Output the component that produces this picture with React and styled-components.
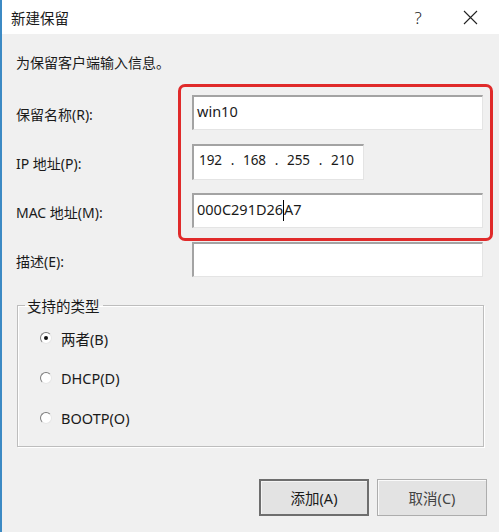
import React from "react";
import styled, { createGlobalStyle } from "styled-components";

const Global = createGlobalStyle`
  html, body { margin: 0; padding: 0; background: #f0f0f0; }
  body { font-family: "Noto Sans", "Noto Sans CJK SC", sans-serif; color: #1a1a1a; }
  * { box-sizing: border-box; }
`;

const Window = styled.div`
  width: 499px;
  height: 532px;
  display: flex;
  flex-direction: column;
  border-left: 2px solid #3c8ac4;
  background: #f0f0f0;
  overflow: hidden;
`;

const TitleBar = styled.div`
  height: 34px;
  flex: none;
  background: #ffffff;
  display: flex;
  align-items: center;
  padding-left: 9px;
  font-size: 14.5px;
  font-family: "Noto Sans CJK SC", sans-serif;
`;

const Title = styled.div`
  flex: 1;
`;

const TitleButton = styled.div`
  width: ${(p) => p.$w}px;
  font-size: 17px;
  font-weight: 300;
  color: #222;
  display: flex;
  justify-content: center;
  align-items: center;
  font-family: "Noto Sans", sans-serif;
`;

const Body = styled.div`
  flex: 1;
  padding: 0 14px;
  display: flex;
  flex-direction: column;
  font-size: 14px;
`;

const Intro = styled.div`
  margin-top: 19px;
  line-height: 20px;
  height: 20px;
`;

const Form = styled.div`
  position: relative;
  margin-top: 22px;
  display: grid;
  grid-template-columns: 176px 291px;
  grid-auto-rows: 35px;
  row-gap: 14px;
`;

const Label = styled.div`
  display: flex;
  align-items: center;
  padding-top: 2px;
  font-size: 14px;
`;

const Field = styled.div`
  width: ${(p) => p.$w || 291}px;
  height: ${(p) => p.$h || 35}px;
  background: #fff;
  border-top: 2px solid #a3a3a3;
  border-left: 2px solid #a3a3a3;
  border-right: 1px solid #e4e4e4;
  border-bottom: 1px solid #e4e4e4;
  padding: 4px 0 0 3px;
  font-size: 14.5px;
  line-height: 20px;
  white-space: pre;
  display: flex;
  align-items: flex-start;
`;

const Octet = styled.span`
  width: 27px;
  text-align: center;
  font-size: 13.5px;
`;

const Dot = styled.span`
  width: 17px;
  text-align: center;
  font-size: 13.5px;
`;

const Caret = styled.span`
  display: inline-block;
  width: 1px;
  height: 21px;
  margin-top: 1px;
  background: #000;
`;

const Highlight = styled.div`
  position: absolute;
  left: 162px;
  top: -11px;
  width: 315px;
  height: 157px;
  border: 3.5px solid #e02a2a;
  border-radius: 7px;
  pointer-events: none;
`;

const Group = styled.fieldset`
  margin: 18px 0 0 1px;
  width: 467px;
  height: 152px;
  padding: 12px 0 0 22px;
  border: 1px solid #bdbdbd;
  box-shadow: 1px 1px 0 #fff, inset 1px 1px 0 #fff;
  display: flex;
  flex-direction: column;
  gap: 20px;
`;

const Legend = styled.legend`
  margin-left: -15px;
  padding: 0 3px 0 2px;
  font-size: 14.5px;
`;

const RadioRow = styled.div`
  display: flex;
  align-items: center;
  height: 20px;
  gap: 9px;
  font-size: 14.5px;
`;

const RadioCircle = styled.span`
  width: 12px;
  height: 12px;
  border-radius: 50%;
  background: #fff;
  border: 1px solid;
  border-color: #7c7c7c #e6e6e6 #e6e6e6 #7c7c7c;
  display: flex;
  align-items: center;
  justify-content: center;
  &::after {
    content: "";
    width: 4px;
    height: 4px;
    border-radius: 50%;
    background: ${(p) => (p.$checked ? "#111" : "transparent")};
  }
`;

const Footer = styled.div`
  margin-top: auto;
  margin-bottom: 16px;
  margin-right: -2px;
  display: flex;
  justify-content: flex-end;
  gap: 8px;
`;

const Button = styled.div`
  width: 110px;
  height: 37px;
  display: flex;
  align-items: center;
  justify-content: center;
  background: #e3e3e3;
  font-size: 14.5px;
  border: ${(p) => (p.$default ? "2px solid #6e6e6e" : "1px solid #adadad")};
  box-shadow: ${(p) =>
    p.$default ? "inset 1px 1px 0 #f4f4f4" : "inset 1px 1px 0 #fafafa"};
  color: ${(p) => (p.$default ? "#1a1a1a" : "#444")};
`;

const CloseIcon = () => (
  <svg width="15" height="15" viewBox="0 0 15 15">
    <path d="M1 1 L14 14 M14 1 L1 14" stroke="#222" strokeWidth="1.1" fill="none" />
  </svg>
);

export default function App() {
  return (
    <>
      <Global />
      <Window>
        <TitleBar>
          <Title>新建保留</Title>
          <TitleButton $w={46}>?</TitleButton>
          <TitleButton $w={58}>
            <CloseIcon />
          </TitleButton>
        </TitleBar>
        <Body>
          <Intro>为保留客户端输入信息。</Intro>
          <Form>
            <Label>保留名称(R):</Label>
            <Field>win10</Field>
            <Label>IP 地址(P):</Label>
            <Field $w={172} $h={36}>
              <Octet>192</Octet>
              <Dot>.</Dot>
              <Octet>168</Octet>
              <Dot>.</Dot>
              <Octet>255</Octet>
              <Dot>.</Dot>
              <Octet>210</Octet>
            </Field>
            <Label>MAC 地址(M):</Label>
            <Field>
              000C291D26
              <Caret />
              A7
            </Field>
            <Label>描述(E):</Label>
            <Field />
            <Highlight />
          </Form>
          <Group>
            <Legend>支持的类型</Legend>
            <RadioRow>
              <RadioCircle $checked />
              两者(B)
            </RadioRow>
            <RadioRow>
              <RadioCircle />
              DHCP(D)
            </RadioRow>
            <RadioRow>
              <RadioCircle />
              BOOTP(O)
            </RadioRow>
          </Group>
          <Footer>
            <Button $default>添加(A)</Button>
            <Button>取消(C)</Button>
          </Footer>
        </Body>
      </Window>
    </>
  );
}
